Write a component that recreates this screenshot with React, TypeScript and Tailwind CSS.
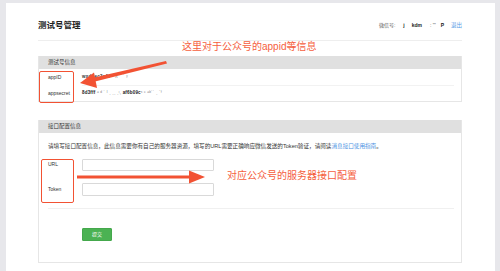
import React from "react";

const RED = "#f25233";

function Arrows() {
  // overlay drawn on top of the screenshot: two red annotation arrows
  return (
    <svg
      className="absolute left-0 top-0 pointer-events-none"
      width={500}
      height={271}
      viewBox="0 0 500 271"
    >
      <polygon points="166,61 167,63.5 93,82 92,78" fill={RED} />
      <polygon points="80,83 94,72.5 97,88" fill={RED} />
      <rect x={77} y={175.5} width={115} height={3} fill={RED} />
      <polygon points="189,170.5 205,177 189,183.5" fill={RED} />
    </svg>
  );
}

function PanelHeader({ title }: { title: string }) {
  return (
    <div className="h-[13px] bg-[#e0e0e0] pl-[9px] flex items-center text-[5.5px] text-[#333] leading-none">
      {title}
    </div>
  );
}

export default function App() {
  return (
    <div className="relative w-[500px] h-[271px] overflow-hidden bg-[#e7e7eb] pl-[6px] pr-[5px] pt-[3px] font-['Liberation_Sans','Noto_Sans_CJK_SC',sans-serif]">
      <div className="bg-white h-full pl-[32px] pr-[33px]">
        {/* page header */}
        <div className="flex items-center justify-between pt-[16px] pb-[9px] border-b border-[#eeeeee]">
          <div className="text-[8.5px] leading-[12px] font-bold text-[#222]">测试号管理</div>
          <div className="flex items-center text-[5px] leading-[12px] text-[#555]">
            <span>微信号:</span>
            <span className="ml-[8px] text-[#222] font-bold tracking-[1px]">j</span>
            <span className="ml-[6px] text-[#222] font-bold">kdm</span>
            <span className="ml-[8px] text-[#444]">: ''' </span>
            <span className="ml-[5px] text-[#222] font-bold">P</span>
            <span className="ml-[7px] text-[5.5px] text-[#5b9ee6]">退出</span>
          </div>
        </div>

        {/* panel 1 */}
        <div className="mt-[15px] border border-[#e6e6e6] border-t-0">
          <PanelHeader title="测试号信息" />
          <div className="flex text-[5px] leading-none text-[#333]">
            <div className="w-[36px] shrink-0">
              <div className="h-[17px] pl-[9px] flex items-center">appID</div>
              <div className="h-[15px] pl-[9px] flex items-center">appsecret</div>
            </div>
            <div className="flex-1 pr-[7px] pl-[7px]">
              <div className="h-[17px] flex items-center border-b border-[#f2f2f2] text-[4.5px] text-[#333] font-bold tracking-[0.3px]">
                wxd6ec3a1f<span className="font-normal text-[#888]">&nbsp;· ʌ˙ ˙˙ ʸ</span>
              </div>
              <div className="h-[15px] flex items-center text-[4.5px] text-[#222] font-bold tracking-[0.2px]">
                8d3fff<span className="font-normal text-[#777]">&nbsp;ᵃ ᵈ ˙ ᴵ ˌ ˌˌ ˌᵎ,</span>
                <span>&nbsp;af6b09c</span>
                <span className="font-normal text-[#777]">ˢ ᵉ ᵃᵇ˙˙ ˌ ˈᶠ</span>
              </div>
            </div>
          </div>
        </div>

        {/* panel 2 */}
        <div className="mt-[18px] border border-[#e6e6e6] border-t-0">
          <PanelHeader title="接口配置信息" />
          <div className="pl-[9px] pr-[7px] pb-[19px] text-[#333]">
            <div className="pt-[8px] text-[5.6px] leading-[10px] whitespace-nowrap">
              请填写接口配置信息，此信息需要你有自己的服务器资源，填写的URL需要正确响应微信发送的Token验证，请阅读
              <span className="text-[#4a90e2]">消息接口使用指南</span>。
            </div>
            <div className="mt-[8px] flex items-center">
              <div className="w-[34px] text-[5px]">URL</div>
              <div className="w-[132px] h-[12px] border border-[#d9d9d9] rounded-[1px]" />
            </div>
            <div className="mt-[12px] flex items-center">
              <div className="w-[34px] text-[5px]">Token</div>
              <div className="w-[132px] h-[13px] border border-[#d9d9d9] rounded-[1px]" />
            </div>
            <div className="mt-[12px] border-t border-[#f0f0f0]" />
            <div className="mt-[10px] pl-[34px]">
              <button className="w-[30px] h-[13px] bg-[#4bb253] border border-[#44a84c] rounded-[1px] text-white text-[5px] leading-none">
                提交
              </button>
            </div>
          </div>
        </div>

        {/* panel 3 (cut off) */}
        <div className="mt-[16px] border border-[#e6e6e6] border-t-0">
          <PanelHeader title="" />
        </div>
      </div>

      {/* annotations */}
      <div className="absolute left-[182px] top-[41px] text-[10px] leading-[12px] text-[#f5603e]">
        这里对于公众号的appid等信息
      </div>
      <div className="absolute left-[227px] top-[170px] text-[10px] leading-[12px] text-[#f5603e]">
        对应公众号的服务器接口配置
      </div>
      <div className="absolute left-[39px] top-[71px] w-[35px] h-[32px] border-[1.5px] border-[#f25233] rounded-[2px]" />
      <div className="absolute left-[41px] top-[159px] w-[33px] h-[44px] border-[1.5px] border-[#f25233] rounded-[2px]" />
      <Arrows />
    </div>
  );
}
